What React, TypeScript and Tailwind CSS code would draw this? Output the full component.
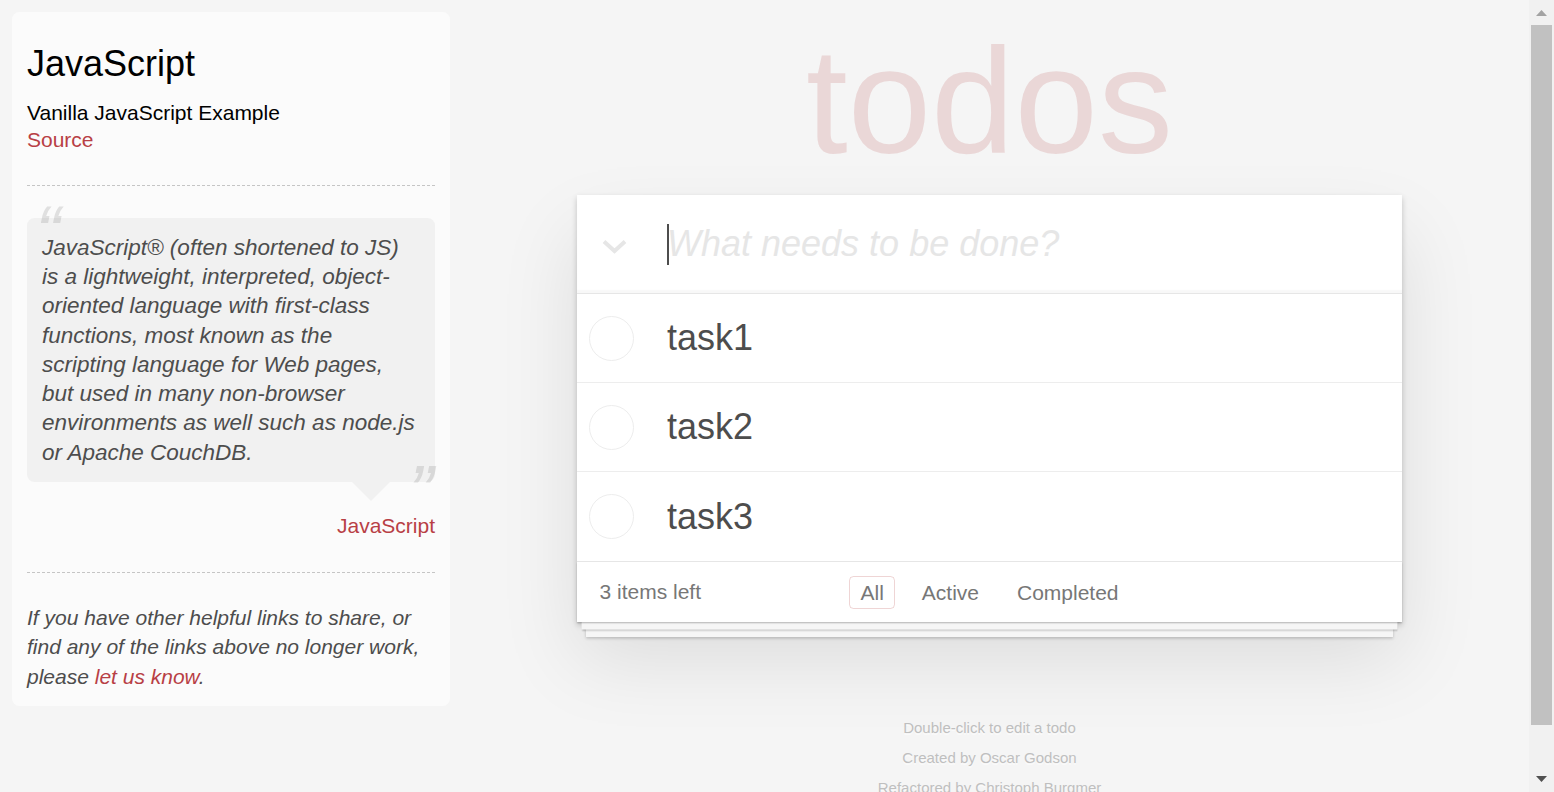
const todos = ["task1", "task2", "task3"];

const filters = [
  { label: "All", selected: true },
  { label: "Active", selected: false },
  { label: "Completed", selected: false },
];

const Sidebar = () => {
  return (
    <aside className="w-[438px] rounded-[7.5px] bg-[#fbfbfb] p-[15px]">
      <h3 className="mt-[15px] mb-[15px] text-[36px] leading-[1.2] text-black">JavaScript</h3>
      <h5 className="text-[21px] leading-[1.2] text-black">Vanilla JavaScript Example</h5>
      <a href="#" className="block text-[21px] leading-[29.4px] text-[#b83f45]">
        Source
      </a>
      <div className="mt-[30px] mb-[32px] border-t border-dashed border-[#c5c5c5]" />

      <blockquote className="relative rounded-[7.5px] bg-[#f1f1f1] p-[15px]">
        <span className="absolute top-[-34px] left-[8.5px] text-[75px] leading-[97.5px] italic text-[rgba(77,77,77,0.15)]">
          “
        </span>
        <p className="text-[22.5px] leading-[1.3] italic text-[#4d4d4d]">
          JavaScript® (often shortened to JS) is a lightweight, interpreted, object-oriented language with first-class
          functions, most known as the scripting language for Web pages, but used in many non-browser environments as
          well such as node.js or Apache CouchDB.
        </p>
        <span className="absolute right-[1.5px] bottom-[-59px] text-[75px] leading-[97.5px] italic text-[rgba(77,77,77,0.15)]">
          ”
        </span>
        <div className="absolute top-full right-[45px] h-0 w-0 border-[19.5px] border-transparent border-t-[#f1f1f1]" />
      </blockquote>
      <div className="mt-[29px] text-right text-[21px] leading-[29.4px]">
        <a href="#" className="text-[#b83f45]">
          JavaScript
        </a>
      </div>

      <div className="mt-[31.5px] mb-[30px] border-t border-dashed border-[#c5c5c5]" />
      <p className="text-[21px] leading-[29.4px] italic text-[#4d4d4d]">
        If you have other helpful links to share, or find any of the links above no longer work, please{" "}
        <a href="#" className="text-[#b83f45]">
          let us know
        </a>
        .
      </p>
    </aside>
  );
};

const TodoApp = () => {
  return (
    <section className="relative w-[825px] shrink-0 bg-white shadow-[0_3px_6px_0_rgba(0,0,0,0.2),0_37.5px_75px_0_rgba(0,0,0,0.1)]">
      <div className="flex h-[98px] items-center shadow-[inset_0_-3px_1.5px_rgba(0,0,0,0.03)]">
        <div className="w-[90px] shrink-0 pl-[25px] pt-[4px]">
          <svg width="25" height="15" viewBox="0 0 25 15" fill="none">
            <polyline points="2,2.5 12.5,12 23,2.5" stroke="#e6e6e6" strokeWidth="4" />
          </svg>
        </div>
        <div className="relative flex-1 self-stretch">
          <span className="absolute top-[29px] left-0 h-[41px] w-[2px] bg-[#4d4d4d]" />
          <input
            className="h-full w-full bg-transparent text-[36px] text-[#4d4d4d] caret-transparent outline-none placeholder:italic placeholder:text-[#e6e6e6]"
            placeholder="What needs to be done?"
          />
        </div>
      </div>

      <ul className="border-t border-[#e6e6e6]">
        {todos.map((todo) => (
          <li key={todo} className="flex h-[89px] items-center border-b border-[#ededed] last:border-b-0">
            <span className="ml-[12px] h-[45px] w-[45px] shrink-0 rounded-full border-[1.5px] border-[#ededed]" />
            <label className="ml-[33px] text-[36px] text-[#4d4d4d]">{todo}</label>
          </li>
        ))}
      </ul>

      <footer className="grid h-[61px] grid-cols-[1fr_auto_1fr] items-center border-t border-[#e6e6e6] bg-white px-[22.5px] text-[21px] text-[#777] shadow-[0_1.5px_1.5px_rgba(0,0,0,0.2),0_12px_0_-4.5px_#f6f6f6,0_13.5px_1.5px_-4.5px_rgba(0,0,0,0.2),0_24px_0_-9px_#f6f6f6,0_25.5px_3px_-9px_rgba(0,0,0,0.2)]">
        <span>3 items left</span>
        <ul className="flex gap-[15px]">
          {filters.map((f) => (
            <li key={f.label}>
              <a
                href="#"
                className={
                  f.selected
                    ? "block rounded-[4.5px] border border-[rgba(175,47,47,0.2)] px-[10.5px] py-[4px] leading-[23px]"
                    : "block rounded-[4.5px] border border-transparent px-[10.5px] py-[4px] leading-[23px]"
                }
              >
                {f.label}
              </a>
            </li>
          ))}
        </ul>
        <span />
      </footer>
    </section>
  );
};

const Scrollbar = () => {
  return (
    <div className="flex h-full w-[25px] shrink-0 flex-col bg-[#f1f1f1]">
      <div className="flex h-[25px] shrink-0 items-start justify-center pt-[10px]">
        <svg width="11" height="6" viewBox="0 0 11 6">
          <polygon points="5.5,0 11,6 0,6" fill="#a3a3a3" />
        </svg>
      </div>
      <div className="mx-[2px] h-[700px] shrink-0 bg-[#c1c1c1]" />
      <div className="flex-1" />
      <div className="flex h-[25px] shrink-0 items-start justify-center pt-[9px]">
        <svg width="11" height="6" viewBox="0 0 11 6">
          <polygon points="0,0 11,0 5.5,6" fill="#505050" />
        </svg>
      </div>
    </div>
  );
};

export default function App() {
  return (
    <div className="flex h-[792px] w-full overflow-hidden bg-[#f5f5f5] font-['Liberation_Sans',Arial,sans-serif]">
      <div className="w-[450px] shrink-0 pt-[12px] pl-[12px]">
        <Sidebar />
      </div>

      <main className="flex min-w-0 flex-1 flex-col items-center">
        <div className="h-[195px] w-[825px] shrink-0">
          <h1 className="pt-[26px] text-center text-[150px] leading-[150px] font-thin text-[rgba(175,47,47,0.15)]">
            todos
          </h1>
        </div>
        <TodoApp />
        <div className="mt-[97.5px] flex shrink-0 flex-col items-center gap-[15px] text-[15px] leading-[15px] text-[#bfbfbf] [text-shadow:0_1.5px_0_rgba(255,255,255,0.5)]">
          <p>Double-click to edit a todo</p>
          <p>Created by Oscar Godson</p>
          <p className="whitespace-nowrap">Refactored by Christoph Burgmer</p>
        </div>
      </main>

      <Scrollbar />
    </div>
  );
}
